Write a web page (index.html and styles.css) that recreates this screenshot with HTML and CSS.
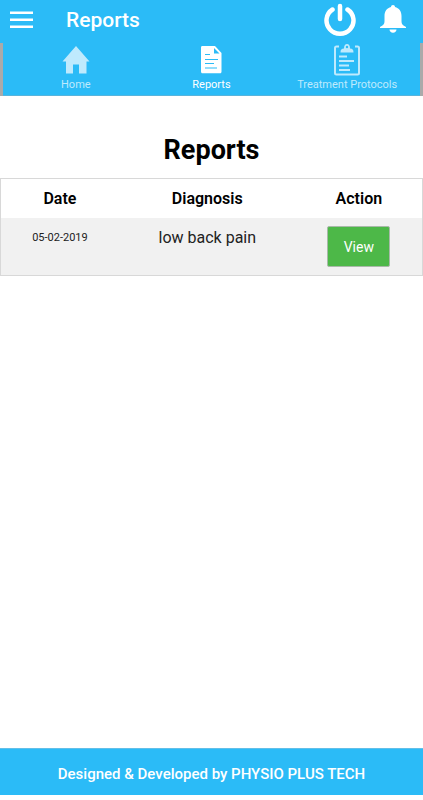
FILE: index.html
```html
<!DOCTYPE html>
<html lang="en">
<head>
    <meta charset="UTF-8">
    <title>Reports</title>
    <meta name="viewport" content="width=device-width, initial-scale=1.0">
    <link rel="stylesheet" href="styles.css">
</head>
<body>
    <header class="toolbar">
        <button class="icon-btn" aria-label="Menu">
            <svg width="24" height="18" viewBox="0 0 24 18"><path d="M0 1.800h23M0 8.800h23M0 15.800h23" stroke="#fff" stroke-width="2.400"/></svg>
        </button>
        <div class="toolbar-title">Reports</div>
        <button class="icon-btn" aria-label="Log out">
            <svg width="32" height="34" viewBox="0 0 32 34"><path d="M8.500 6.500A13.500 13.200 0 1 0 23.500 6.500M16 3v13" fill="none" stroke="#fff" stroke-width="4.500" stroke-linecap="round"/></svg>
        </button>
        <button class="icon-btn" aria-label="Notifications">
            <svg width="28" height="30" viewBox="0 1 28 30" fill="#fff"><path d="M14 1c1.200 0 2 .8 2 2 4 1 6.500 4 6.500 9v5c0 3 1 4 4.500 6v1H1v-1c3.500-2 4.500-3 4.500-6v-5c0-5 2.500-8 6.500-9 0-1.200.8-2 2-2zM10.500 25.500h7c0 2-1.500 3.200-3.500 3.200s-3.500-1.200-3.500-3.200z"/></svg>
        </button>
    </header>

    <nav class="tabs">
        <a href="#home" class="tab">
            <svg width="28" height="32" viewBox="0 0 28 32" fill="currentColor"><path d="M14 2L27.500 17.500h-3V29.500H17v-9h-6v9H4V17.500H.5z"/></svg>
            Home
        </a>
        <a href="#reports" class="tab active">
            <svg width="28" height="32" viewBox="0 0 28 32">
                <path d="M5.500 2H18l6.500 7v18.500c0 1-.5 1.800-1.500 1.800H5.500c-1 0-1.500-.8-1.500-1.800v-24C4 2.500 4.500 2 5.500 2z" fill="currentColor"/>
                <path d="M17 4v5.500h5.500z" fill="#2bbbf7"/>
                <path d="M8 10.500h5M8 15.500h13M8 19.500h9M8 24h12" stroke="#2bbbf7" stroke-width="1.200"/>
            </svg>
            Reports
        </a>
        <a href="#protocols" class="tab">
            <svg width="28" height="32" viewBox="0 0 28 32">
                <path d="M6 2.500H3.500Q2 2.500 2 4v25q0 1.500 1.500 1.500h21q1.500 0 1.500-1.500V4q0-1.500-1.500-1.500H22" fill="none" stroke="currentColor" stroke-width="2"/>
                <path d="M7.500 8.500c0-3 1-4 3.500-4C11 1.500 12 0 14 0s3 1.500 3 4.500c2.500 0 3.500 1 3.500 4z" fill="currentColor"/>
                <circle cx="14" cy="3" r="1.200" fill="#2bbbf7"/>
                <path d="M6 12.500h8M6 17h15M6 21.500h10M6 26h11" stroke="currentColor" stroke-width="2"/>
            </svg>
            Treatment Protocols
        </a>
    </nav>

    <main class="content">
        <h1>Reports</h1>
        <table class="reports">
            <thead>
                <tr>
                    <th class="col-date">Date</th>
                    <th>Diagnosis</th>
                    <th class="col-action">Action</th>
                </tr>
            </thead>
            <tbody>
                <tr>
                    <td class="date">05-02-2019</td>
                    <td>low back pain</td>
                    <td><button class="view-btn">View</button></td>
                </tr>
            </tbody>
        </table>
    </main>

    <footer class="footer">Designed &amp; Developed by PHYSIO PLUS TECH</footer>
</body>
</html>
```

FILE: styles.css
```css
* {
    box-sizing: border-box;
}

body {
    display: flex;
    flex-direction: column;
    min-height: 100vh;
    margin: 0;
    padding-bottom: 5px;
    font-family: Roboto, sans-serif;
    background: #fff;
    color: #000;
}

svg {
    display: block;
}

.toolbar {
    display: flex;
    align-items: center;
    height: 43px;
    padding: 0 16px 4px 10px;
    background: #2bbbf7;
    color: #fff;
}

.toolbar-title {
    flex: 1;
    margin-left: 32px;
    font-size: 21px;
    font-weight: 500;
}

.icon-btn {
    padding: 0;
    border: none;
    background: none;
    cursor: pointer;
}

.icon-btn + .icon-btn {
    margin-left: 23px;
}

.tabs {
    display: grid;
    grid-template-columns: repeat(3, 1fr);
    height: 53px;
    padding: 0 5px;
    border: solid #aaa;
    border-width: 0 3px;
    background: #2bbbf7;
    box-shadow: inset 0 -1px #58b4dc;
}

.tab {
    display: flex;
    flex-direction: column;
    align-items: center;
    padding-top: 1px;
    font-size: 11px;
    line-height: 18px;
    white-space: nowrap;
    color: #bfeafd;
    text-decoration: none;
}

.tab.active {
    color: #fff;
}

.content {
    flex: 1;
}

h1 {
    margin: 36px 0 10px;
    font-size: 27px;
    font-weight: 700;
    line-height: 36px;
    text-align: center;
}

.reports {
    width: 100%;
    border: 1px solid #d8d8d8;
    border-spacing: 0;
    table-layout: fixed;
    text-align: center;
}

.reports th {
    height: 39px;
    padding: 0;
    font-size: 16px;
    font-weight: 600;
}

.reports td {
    padding: 8px 0;
    font-size: 16px;
    line-height: 24px;
    vertical-align: top;
    background: #f1f1f1;
    color: #222;
}

.reports .date {
    font-size: 11px;
}

.col-date {
    width: 28%;
}

.col-action {
    width: 30%;
}

.view-btn {
    display: block;
    width: 63px;
    height: 41px;
    margin: 0 auto;
    border: 1px solid #a9b9a9;
    border-radius: 2px;
    font-family: inherit;
    font-size: 14px;
    background: #4db848;
    color: #fff;
    cursor: pointer;
}

.footer {
    padding: 4px 0 0;
    border-top: 1px solid #62bfe8;
    font-size: 15px;
    font-weight: 500;
    line-height: 42px;
    text-align: center;
    background: #2bbbf7;
    color: #fff;
}
```
